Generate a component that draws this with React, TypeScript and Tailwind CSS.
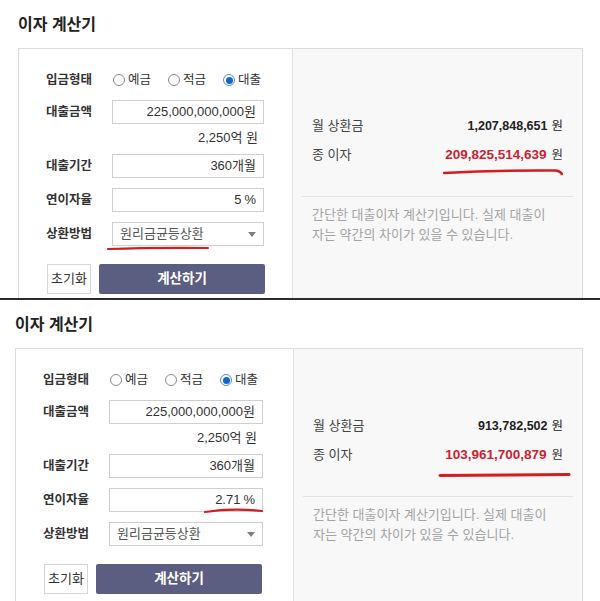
import React from 'react';

type Layout = {
  pad: string;
  box: string;
  left: string;
  field: string;
};

const topLayout: Layout = {
  pad: 'pl-[18px]',
  box: 'w-[565px]',
  left: 'w-[273px]',
  field: 'w-[152px]',
};

const bottomLayout: Layout = {
  pad: 'pl-[15px]',
  box: 'w-[568px]',
  left: 'w-[277px]',
  field: 'w-[154px]',
};

function Radio({ label, checked }: { label: string; checked?: boolean }) {
  return (
    <label className="flex items-center gap-[3px]">
      {checked ? (
        <span className="flex h-[12px] w-[12px] items-center justify-center rounded-full border border-[#4d8fd6] bg-white">
          <span className="h-[7px] w-[7px] rounded-full bg-[#1565c8]" />
        </span>
      ) : (
        <span className="h-[12px] w-[12px] rounded-full border border-[#8a8a8a] bg-white" />
      )}
      <span className="text-[12.5px] leading-[20px] text-[#333]">{label}</span>
    </label>
  );
}

function Row({ label, children, className = '' }: { label: string; children: React.ReactNode; className?: string }) {
  return (
    <div className={`flex items-center ${className}`}>
      <span className="w-[66px] shrink-0 text-[12.5px] font-bold leading-[20px] text-[#333]">{label}</span>
      {children}
    </div>
  );
}

function Field({ width, children }: { width: string; children: React.ReactNode }) {
  return (
    <div className={`flex h-[24px] ${width} items-center justify-end border border-[#cfcfcf] bg-white pr-[7px] text-[13px] text-[#333]`}>
      {children}
    </div>
  );
}

function Calculator({ layout, rate, monthly, total }: { layout: Layout; rate: string; monthly: string; total: string }) {
  return (
    <div className={`${layout.pad} pt-[15px]`}>
      <h2 className="text-[16px] font-bold leading-[20px] text-[#222]">이자 계산기</h2>
      <div className={`mt-[13px] flex h-[300px] ${layout.box} border border-[#dcdcdc]`}>
        <div className={`${layout.left} shrink-0 bg-white pl-[27px] pt-[21px]`}>
          <Row label="입금형태">
            <div className="flex items-center gap-[17px] pl-[1px]">
              <Radio label="예금" />
              <Radio label="적금" />
              <Radio label="대출" checked />
            </div>
          </Row>
          <Row label="대출금액" className="mt-[10px]">
            <Field width={layout.field}>225,000,000,000원</Field>
          </Row>
          <div className="flex">
            <span className="w-[66px] shrink-0" />
            <div className={`${layout.field} mt-[6px] pr-[6px] text-right text-[13px] leading-[16px] text-[#333]`}>
              2,250억 원
            </div>
          </div>
          <Row label="대출기간" className="mt-[8px]">
            <Field width={layout.field}>360개월</Field>
          </Row>
          <Row label="연이자율" className="mt-[10px]">
            <Field width={layout.field}>
              {rate}
              <span className="ml-[3px]">%</span>
            </Field>
          </Row>
          <Row label="상환방법" className="mt-[10px]">
            <div className={`flex h-[24px] ${layout.field} items-center justify-between border border-[#cfcfcf] bg-white pl-[7px] pr-[7px] text-[13px] text-[#555]`}>
              <span>원리금균등상환</span>
              <svg width="8" height="5" viewBox="0 0 8 5">
                <path d="M0 0 L8 0 L4 5 Z" fill="#7d7d7d" />
              </svg>
            </div>
          </Row>
          <div className="mt-[18px] flex gap-[8px] pl-[1px]">
            <button className="h-[30px] w-[44px] border border-[#d6d6d6] bg-white text-[13px] text-[#333]">초기화</button>
            <button className="h-[30px] w-[166px] rounded-[2px] bg-[#5b5e80] text-[13.5px] font-bold text-white">계산하기</button>
          </div>
        </div>
        <div className="flex-1 border-l border-[#e0e0e0] bg-[#f8f8f8] px-[9px] pt-[67px]">
          <div className="flex h-[20px] items-center justify-between px-[10px] text-[13px]">
            <span className="text-[#444]">월 상환금</span>
            <span className="text-[12.5px] text-[#222]">
              <span className="font-bold">{monthly}</span>
              <span className="ml-[4px]">원</span>
            </span>
          </div>
          <div className="mt-[9px] flex h-[20px] items-center justify-between px-[10px] text-[13px]">
            <span className="text-[#444]">종 이자</span>
            <span className="text-[12.5px] text-[#333]">
              <span className="text-[13.5px] font-bold text-[#cc2130]">{total}</span>
              <span className="ml-[5px]">원</span>
            </span>
          </div>
          <div className="mt-[31px] h-px bg-[#e4e4e4]" />
          <p className="mt-[8px] px-[10px] text-[13px] leading-[20px] text-[#a3a3a3]">
            간단한 대출이자 계산기입니다. 실제 대출이
            <br />
            자는 약간의 차이가 있을 수 있습니다.
          </p>
        </div>
      </div>
    </div>
  );
}

export default function App() {
  return (
    <div className="h-[601px] w-[600px] overflow-hidden bg-white font-['Liberation_Sans','Noto_Sans_CJK_KR',sans-serif]">
      <section className="relative h-[298px] overflow-hidden">
        <Calculator layout={topLayout} rate="5" monthly="1,207,848,651" total="209,825,514,639" />
        {/* hand-drawn red marks */}
        <svg className="pointer-events-none absolute left-0 top-0" width="600" height="298">
          <path d="M108 249 Q150 247.5 208 248" stroke="#d81c1c" strokeWidth="2.2" fill="none" strokeLinecap="round" />
          <path d="M444 173 Q500 170 556 170.5 Q560 171 562 174" stroke="#d81c1c" strokeWidth="2.4" fill="none" strokeLinecap="round" />
        </svg>
      </section>
      <div className="h-[2px] bg-[#2b2b2b]" />
      <section className="relative h-[301px] overflow-hidden">
        <Calculator layout={bottomLayout} rate="2.71" monthly="913,782,502" total="103,961,700,879" />
        <svg className="pointer-events-none absolute left-0 top-0" width="600" height="301">
          <path d="M205 212 Q232 208 262 211" stroke="#d81c1c" strokeWidth="2.2" fill="none" strokeLinecap="round" />
          <path d="M440 175.5 L569 174.5" stroke="#d81c1c" strokeWidth="3" fill="none" strokeLinecap="round" />
        </svg>
      </section>
    </div>
  );
}
